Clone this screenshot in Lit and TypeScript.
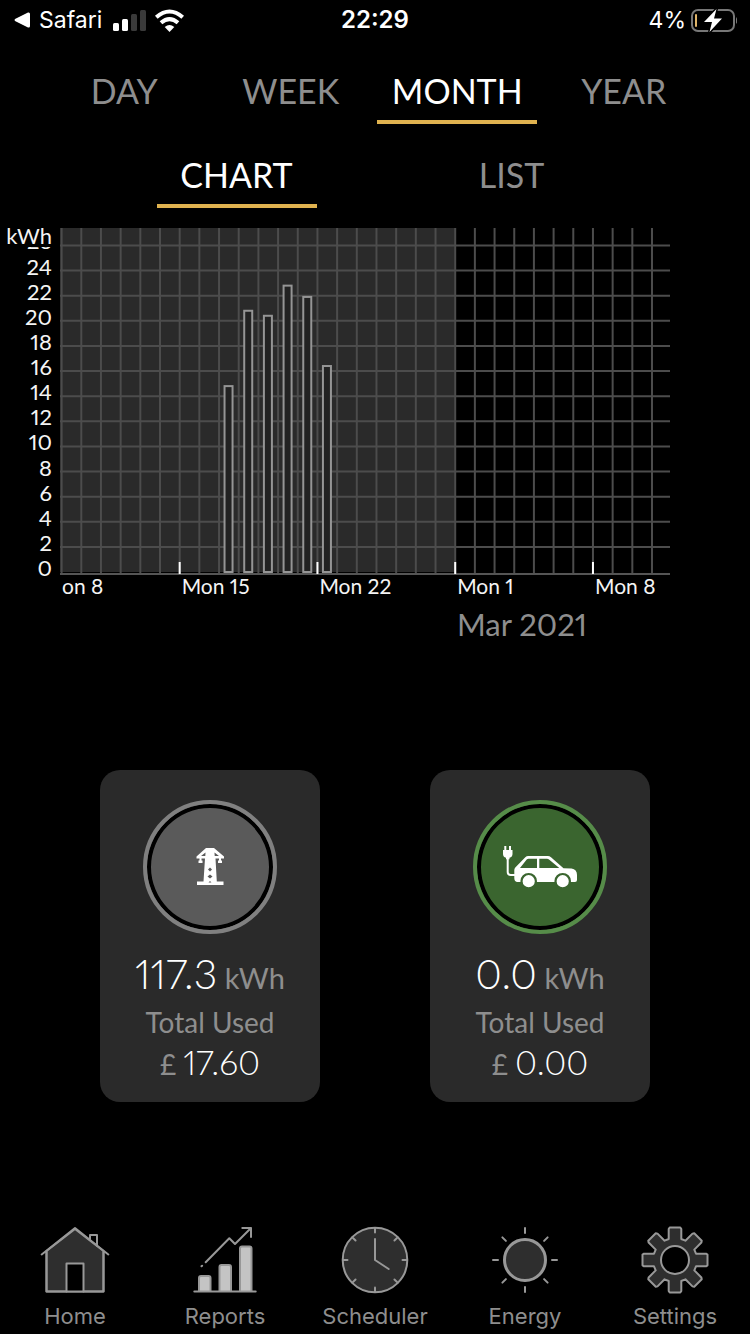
import { LitElement, html, svg, css } from "lit";
import { customElement, state } from "lit/decorators.js";

const Y_STEP = 25.12;
const X_STEP = 19.68;
const BASE_Y = 572;
const MONTH_X = 455.2;
const range = (from: number, to: number) =>
  Array.from({ length: to - from + 1 }, (_, i) => from + i);

const DAILY_USE = [
  { day: -12, kwh: 14.8 },
  { day: -11, kwh: 20.8 },
  { day: -10, kwh: 20.4 },
  { day: -9, kwh: 22.8 },
  { day: -8, kwh: 21.9 },
  { day: -7, kwh: 16.4 },
];

const WEEKS = [
  { day: -14, label: "Mon 15" },
  { day: -7, label: "Mon 22" },
  { day: 0, label: "Mon 1" },
  { day: 7, label: "Mon 8" },
];

@customElement("usage-chart")
export class UsageChart extends LitElement {
  static styles = css`
    :host { display: block; }
    svg { display: block; width: 100%; height: auto; font-variant-numeric: proportional-nums; }
    .grid { stroke: #4c4c4c; stroke-width: 2; fill: none; }
    .axis { stroke: #555; stroke-width: 2; }
    .past { fill: #2a2a2a; }
    .bar { fill: #222; stroke: #959595; stroke-width: 2; }
    .tick { stroke: #fff; stroke-width: 2; }
    .label { fill: #f4f4f4; font-family: Lato, sans-serif; font-size: 21px; }
    .scale { text-anchor: end; font-size: 22px; }
    .month { fill: #8e8e8e; font-family: Lato, sans-serif; font-size: 31px; }
  `;

  render() {
    return html`<svg viewBox="0 208 750 442" role="img" aria-label="Energy used per day in kWh">
      <defs>
        <clipPath id="scale-area"><rect x="0" y="247" width="60" height="340"></rect></clipPath>
      </defs>
      <rect class="past" x="60" y="228" width="396" height="344"></rect>
      <g class="grid">
        ${range(-20, 10).map((d) => {
          const x = MONTH_X + d * X_STEP;
          return svg`<line x1=${x} x2=${x} y1="228" y2="573"></line>`;
        })}
        ${range(1, 13).map((i) => {
          const y = BASE_Y - i * Y_STEP;
          return svg`<line x1="60" x2="670" y1=${y} y2=${y}></line>`;
        })}
      </g>
      <line class="axis" x1="60" x2="670" y1="574" y2="574"></line>
      ${DAILY_USE.map(({ day, kwh }) => {
        const h = (kwh * Y_STEP) / 2;
        return svg`<rect class="bar" x=${MONTH_X + day * X_STEP + 5.5} y=${BASE_Y - h} width="8" height=${h}></rect>`;
      })}
      ${WEEKS.map(({ day, label }) => {
        const x = MONTH_X + day * X_STEP;
        return svg`<line class="tick" x1=${x} x2=${x} y1="562" y2="574"></line>
          <text class="label" x=${x + 2} y="594">${label}</text>`;
      })}
      <text class="label" x="62" y="594">on 8</text>
      <text class="month" x="457" y="636">Mar 2021</text>
      <g clip-path="url(#scale-area)">
        ${range(0, 13).map(
          (i) => svg`<text class="label scale" x="52" y=${576 - i * Y_STEP}>${i * 2}</text>`,
        )}
      </g>
      <text class="label scale" x="52" y="244">kWh</text>
    </svg>`;
  }
}

const PYLON = svg`
  <path fill="#fff" fill-rule="evenodd" d="M63 48h8l10 8.500v2h-3v2h1v2.500h-4v-2.500h1v-2h-3.500l1.300 23h6.700v3.500h-26.500v-3.500h6.500l1.500-23h-3.500v2h1v2.500h-4v-2.500h1v-2h-3v-2zM62.500 52.500l-4.500 3.500h4.300zM71.500 52.500l.2 3.500h4.300zM67 67.500l-2 2 2 2 2-2zM67 74.500l-2.500 2 2.500 2 2.500-2zM67 81l-1.500 1.500h3z"></path>`;

const CAR = svg`
  <g fill="#fff">
    <rect x="31.300" y="46" width="2" height="5"></rect>
    <rect x="36" y="46" width="2" height="5"></rect>
    <path d="M30 50h9.500v4q0 3-3 3.800v1.500h-3.500v-1.500q-3-.8-3-3.800z"></path>
    <path fill="none" stroke="#fff" stroke-width="2" d="M34.700 58v14q0 3 3 3h6"></path>
    <path fill-rule="evenodd" d="M41.300 70q0-1.500 1-2.500l10-10.300q1.200-1.200 3-1.200h19.500q1.800 0 3.200 1.200l12.500 11 8 .3q5.500.8 5.500 6.500v5q0 2-2 2h-58q-2.700-.5-2.700-4zM47 68h17v-9.300h-8.500q-1 0-1.800.8zM66.300 68h20l-10.300-8.500q-.8-.8-2-.8h-7.700z"></path>
  </g>
  <g fill="#fff" stroke="#3a652f" stroke-width="2.200">
    <circle cx="55.700" cy="81.200" r="7.200"></circle>
    <circle cx="89.700" cy="81.200" r="7.200"></circle>
  </g>`;

const gearPath = () => {
  const points: string[] = [];
  for (let i = 0; i < 8; i++) {
    const a = (i * Math.PI) / 4;
    for (const [x, y] of [[-6.3, -21], [-6.3, -31], [-5.3, -32.5], [5.3, -32.5], [6.3, -31], [6.3, -21]]) {
      const px = 35 + x * Math.cos(a) - y * Math.sin(a);
      const py = 35 + x * Math.sin(a) + y * Math.cos(a);
      points.push(`${px.toFixed(2)} ${py.toFixed(2)}`);
    }
  }
  return `M${points.join("L")}ZM49 35a14 14 0 1 0-28 0a14 14 0 1 0 28 0Z`;
};

const spokes = (r1: number, r2: number) =>
  range(0, 7).map(
    (i) => svg`<line x1="35" x2="35" y1=${35 - r1} y2=${35 - r2} transform="rotate(${i * 45} 35 35)"></line>`,
  );

const NAV = [
  {
    label: "Home",
    icon: svg`<path class="fill" d="M6.500 26L35 4l28.500 22v40.500h-57z"></path>
      <path class="hole" d="M26.500 66.500v-28h17v28"></path>
      <path d="M50 14V10h7v11"></path>
      <path d="M6.500 26v40.500h57V26M1.700 29.500L35 3l33.300 26.500"></path>`,
  },
  {
    label: "Reports",
    icon: svg`<g class="bars"><path d="M9 66V53q0-2 2-2h7.500q2 0 2 2v13M29.500 66V42q0-2 2-2h7.500q2 0 2 2v24M50 66V23.500q0-2 2-2h7.500q2 0 2 2V66"></path></g>
      <path d="M4.300 66.500h61.400M15.700 37.300l23.600-24 5.700 5.700L61 3M52.300 3H61v9M11.500 41.300l.6-.6"></path>`,
  },
  {
    label: "Scheduler",
    icon: svg`<circle class="fill" cx="35" cy="35" r="32.300"></circle>${spokes(32, 27.5)}
      <path d="M35 14v21l13.700 9"></path>`,
  },
  {
    label: "Energy",
    icon: svg`<circle class="fill thick" cx="35" cy="35" r="20.500"></circle>${spokes(32, 27)}`,
  },
  {
    label: "Settings",
    icon: svg`<path class="fill" fill-rule="evenodd" d=${gearPath()}></path>`,
  },
];

const TOTALS = [
  { kind: "grid", icon: PYLON, name: "Grid", kwh: "117.3", cost: "17.60" },
  { kind: "car", icon: CAR, name: "Car charging", kwh: "0.0", cost: "0.00" },
];

@customElement("app-root")
export class AppRoot extends LitElement {
  static styles = css`
    :host {
      display: flex;
      flex-direction: column;
      min-height: 100vh;
      background: #000;
      color: #fff;
      font-family: Lato, sans-serif;
    }
    button {
      appearance: none;
      border: 0;
      margin: 0;
      padding: 0;
      background: none;
      color: inherit;
      font: inherit;
      cursor: pointer;
    }
    svg { display: block; }
    .status {
      display: grid;
      grid-template-columns: 1fr auto 1fr;
      align-items: center;
      height: 40px;
      padding: 0 13px;
      font: 400 23px/28px Inter, sans-serif;
    }
    .side { display: flex; align-items: center; gap: 10px; }
    .side.end { justify-content: flex-end; gap: 4px; }
    .back { display: flex; align-items: center; gap: 8px; color: #fff; text-decoration: none; }
    .clock { font-weight: 600; font-size: 24px; }
    .tabs { display: grid; font-size: 34px; }
    .periods { grid-template-columns: repeat(4, 1fr); padding: 32px 43px 0 41px; }
    .views { grid-template-columns: repeat(2, 1fr); padding: 32px 101px 0 99px; }
    .tab {
      justify-self: center;
      width: 160px;
      height: 52px;
      padding-bottom: 10px;
      border-bottom: 4px solid transparent;
      color: #8e8e8e;
      line-height: 36px;
    }
    .tab[aria-selected="true"] { color: #fff; border-color: #dfb24f; }
    .totals {
      display: grid;
      grid-template-columns: repeat(2, 1fr);
      padding: 120px 45px 60px;
    }
    .card {
      justify-self: center;
      box-sizing: border-box;
      display: flex;
      flex-direction: column;
      align-items: center;
      width: 220px;
      padding: 30px 0 18px;
      border-radius: 20px;
      background: #2a2a2a;
      color: #8e8e8e;
      white-space: nowrap;
      font-variant-numeric: proportional-nums;
    }
    .dial {
      box-sizing: border-box;
      width: 134px;
      height: 134px;
      border-radius: 50%;
      border: 4px solid #808080;
      background: #5a5a5a;
      box-shadow: inset 0 0 0 4px #000;
    }
    .dial svg { margin: -4px; }
    .car .dial { border-color: #568c49; background: #3a652f; }
    .energy { margin-top: 15px; font-size: 29px; line-height: 50px; }
    .energy b { font-size: 41px; font-weight: 300; color: #fff; }
    .caption { font-size: 28px; line-height: 38px; }
    .cost { margin-top: 3px; font-size: 28px; line-height: 40px; height: 40px; }
    .cost b { font-size: 34px; font-weight: 300; color: #fff; line-height: 34px; }
    .bottom {
      display: grid;
      grid-template-columns: repeat(5, 1fr);
      margin-top: auto;
      padding-bottom: 4px;
      font: 400 22px/28px Inter, sans-serif;
      color: #8e8e8e;
    }
    .item {
      display: flex;
      flex-direction: column;
      align-items: center;
      gap: 7px;
      color: inherit;
      text-decoration: none;
    }
    .item svg {
      fill: none;
      stroke: #989898;
      stroke-width: 2;
      stroke-linecap: round;
      stroke-linejoin: round;
    }
    .item .fill { fill: #2e2e2e; }
    .item .hole { fill: #000; }
    .item .thick { stroke-width: 3; }
    .item .bars { fill: #c4c4c4; }
  `;

  @state() private period = "MONTH";
  @state() private view = "CHART";

  private tab(name: string, current: string, pick: (n: string) => void) {
    return html`<button class="tab" role="tab" aria-selected=${name === current ? "true" : "false"}
      @click=${() => pick(name)}>${name}</button>`;
  }

  render() {
    return html`
      <header class="status">
        <div class="side">
          <a class="back" href="#safari">
            <svg width="18" height="18" viewBox="-1 0 18 18"><path fill="#fff" d="M1 8q-1 1 0 2l13 6.500q2 .5 2-1.500v-12q0-2-2-1.500z"></path></svg>
            Safari
          </a>
          <svg width="72" height="24" viewBox="0 0 72 24" aria-label="Signal">
            <g fill="#fff">
              <rect x="1" y="15" width="6" height="8" rx="1.500"></rect>
              <rect x="10" y="11" width="6" height="12" rx="1.500"></rect>
              <g fill="#3a3a3a">
                <rect x="19" y="6" width="6" height="17" rx="1.500"></rect>
                <rect x="28" y="2" width="6" height="21" rx="1.500"></rect>
              </g>
              <path d="M57.500 24l-4.800-4.900q4.800-4 9.600 0z"></path>
            </g>
            <g fill="none" stroke="#fff" stroke-width="4">
              <path d="M44.300 9.300q13.200-11.600 26.400 0"></path>
              <path d="M49 14.800q8.500-7.400 17 0"></path>
            </g>
          </svg>
        </div>
        <div class="clock">22:29</div>
        <div class="side end">
          4%
          <svg width="47" height="26" viewBox="0 0 47 26" aria-label="Battery charging">
            <rect x="2" y="3" width="42" height="21" rx="6" fill="none" stroke="#777" stroke-width="2"></rect>
            <path d="M46 10q3 3.500 0 7z" fill="#777"></path>
            <rect x="5" y="7" width="2" height="13" rx="1" fill="#e0b56a"></rect>
            <path d="M26.500 2L14 15h8l-2.500 10L32 11.500h-8z" fill="#fff" stroke="#000" stroke-width="3" paint-order="stroke"></path>
          </svg>
        </div>
      </header>

      <div class="tabs periods" role="tablist" aria-label="Period">
        ${["DAY", "WEEK", "MONTH", "YEAR"].map((n) => this.tab(n, this.period, (v) => (this.period = v)))}
      </div>
      <div class="tabs views" role="tablist" aria-label="View">
        ${["CHART", "LIST"].map((n) => this.tab(n, this.view, (v) => (this.view = v)))}
      </div>

      <usage-chart></usage-chart>

      <section class="totals">
        ${TOTALS.map(
          (t) => html`<article class="card ${t.kind}">
            <div class="dial"><svg width="134" height="134" viewBox="0 0 134 134" role="img" aria-label=${t.name}>${t.icon}</svg></div>
            <div class="energy"><b>${t.kwh}</b> kWh</div>
            <div class="caption">Total Used</div>
            <div class="cost">£ <b>${t.cost}</b></div>
          </article>`,
        )}
      </section>

      <nav class="bottom">
        ${NAV.map(
          (n) => html`<a class="item" href="#${n.label.toLowerCase()}">
            <svg width="70" height="70" viewBox="0 0 70 70" aria-hidden="true">${n.icon}</svg>
            <span>${n.label}</span>
          </a>`,
        )}
      </nav>
    `;
  }
}
